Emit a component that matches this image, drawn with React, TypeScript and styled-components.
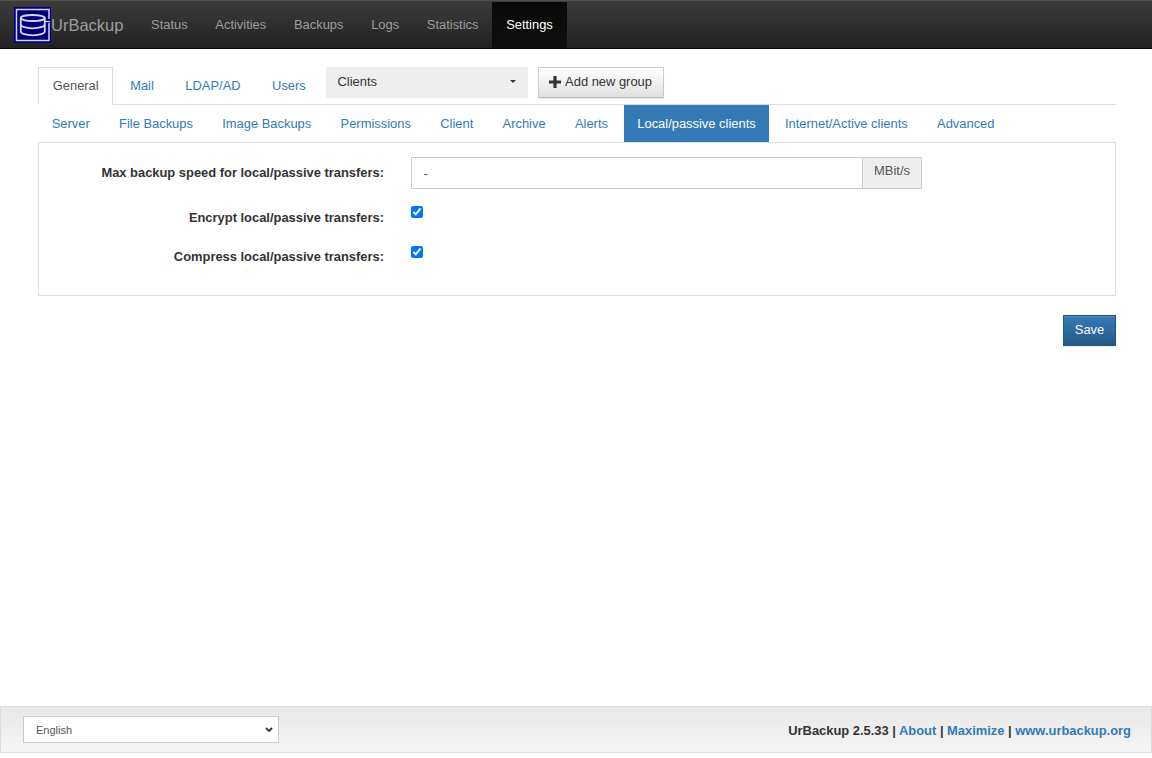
import React from "react";
import styled, { createGlobalStyle } from "styled-components";

const Global = createGlobalStyle`
  html, body { margin: 0; padding: 0; height: 100%; background: #fff; }
  body { font-family: "Liberation Sans", Arial, sans-serif; font-size: 12.92px; line-height: 18px; color: #333; }
  #root { height: 100%; }
  * { box-sizing: border-box; }
`;

const Page = styled.div`
  height: 758px;
  display: flex;
  flex-direction: column;
  padding-bottom: 5px;
  overflow: hidden;
`;
const Navbar = styled.nav`
  height: 49px;
  flex: none;
  display: flex;
  align-items: stretch;
  padding: 2px 0 0 14px;
  background: linear-gradient(to bottom, #3c3c3c 0%, #222 100%);
  border-bottom: 1px solid #080808;
  box-shadow: inset 0 1px 0 #505050;
`;
const Brand = styled.a`
  display: flex;
  align-items: center;
  margin-right: 13.75px;
  font-size: 16.5px;
  color: #9d9d9d;
`;
const NavItem = styled.a<{ $active?: boolean }>`
  display: flex;
  align-items: center;
  padding: 0 13.85px;
  color: ${(p) => (p.$active ? "#fff" : "#9d9d9d")};
  background: ${(p) => (p.$active ? "linear-gradient(to bottom, #0a0a0a, #0f0f0f)" : "transparent")};
`;
const Main = styled.main`
  flex: 1;
  padding: 18px 36px 0 38px;
`;
const TopTabs = styled.div`
  display: flex;
  height: 38px;
  gap: 2px;
  align-items: flex-start;
  border-bottom: 1px solid #ddd;
`;
const TopTab = styled.a<{ $active?: boolean }>`
  height: ${(p) => (p.$active ? "38px" : "37px")};
  display: flex;
  align-items: center;
  padding: ${(p) => (p.$active ? "0 13.75px" : "1px 13.75px 0")};
  color: ${(p) => (p.$active ? "#555" : "#337ab7")};
  background: #fff;
  border: 1px solid ${(p) => (p.$active ? "#ddd" : "transparent")};
  border-bottom-color: ${(p) => (p.$active ? "#fff" : "transparent")};
`;
const GroupSelect = styled.div`
  width: 202px;
  height: 31px;
  margin-left: 3px;
  padding: 0 12px 2px;
  display: flex;
  align-items: center;
  justify-content: space-between;
  background: #eee;
  color: #333;
`;
const Caret = styled.span`
  width: 0;
  height: 0;
  border-top: 3px solid #333;
  border-left: 3px solid transparent;
  border-right: 3px solid transparent;
`;
const AddButton = styled.button`
  width: 126px;
  height: 31px;
  margin-left: 8px;
  padding: 0 0 2px;
  display: flex;
  align-items: center;
  justify-content: center;
  gap: 4px;
  font: inherit;
  color: #333;
  border: 1px solid #ccc;
  border-bottom-color: #bbb;
  background: linear-gradient(to bottom, #fff 0%, #e0e0e0 100%);
  box-shadow: inset 0 1px 0 rgba(255,255,255,.15), 0 1px 1px rgba(0,0,0,.075);
`;
const SubTabs = styled.div`
  display: flex;
  height: 37px;
  gap: 2px;
`;
const SubTab = styled.a<{ $active?: boolean }>`
  display: flex;
  align-items: center;
  padding: 0 13.68px;
  color: ${(p) => (p.$active ? "#fff" : "#337ab7")};
  background: ${(p) => (p.$active ? "#337ab7" : "transparent")};
`;
const Panel = styled.section`
  height: 154px;
  padding: 14px 0 0;
  border: 1px solid #ddd;
`;
const Row = styled.div<{ $h: number }>`
  display: flex;
  height: ${(p) => p.$h}px;
`;
const Label = styled.label`
  width: 345px;
  padding-top: 7px;
  text-align: right;
  font-weight: 700;
`;
const Field = styled.div`
  margin-left: 27px;
  display: flex;
  align-items: flex-start;
`;
const TextInput = styled.input`
  width: 451px;
  height: 32px;
  padding: 0 11.5px;
  font: inherit;
  color: #555;
  border: 1px solid #ccc;
  border-right: 0;
  outline: none;
  background: #fff;
`;
const Addon = styled.span`
  width: 60px;
  height: 32px;
  display: flex;
  align-items: center;
  justify-content: center;
  padding-bottom: 4px;
  color: #555;
  background: #eee;
  border: 1px solid #ccc;
`;
const Check = styled.input<{ $top: number }>`
  margin: ${(p) => p.$top}px 0 0;
  width: 12px;
  height: 12px;
  accent-color: #0075ff;
`;
const SaveRow = styled.div`
  display: flex;
  justify-content: flex-end;
  margin-top: 19px;
`;
const SaveButton = styled.button`
  width: 53px;
  height: 31px;
  padding: 0 0 2px;
  font: inherit;
  color: #fff;
  border: 1px solid #245580;
  background: linear-gradient(to bottom, #337ab7 0%, #265a88 100%);
  box-shadow: inset 0 1px 0 rgba(255,255,255,.15), 0 1px 1px rgba(0,0,0,.075);
`;
const Footer = styled.footer`
  height: 47px;
  flex: none;
  display: flex;
  align-items: center;
  justify-content: space-between;
  padding: 0 20px 0 22px;
  border: 1px solid #ddd;
  background: linear-gradient(to bottom, #e8e8e8 0%, #f5f5f5 100%);
`;
const LangWrap = styled.div`
  position: relative;
  width: 256px;
  height: 27px;
`;
const Lang = styled.select`
  width: 100%;
  height: 100%;
  padding: 0 12px;
  appearance: none;
  font: 11px "Liberation Sans", Arial, sans-serif;
  color: #555;
  background: #fff;
  border: 1px solid #ccc;
  border-radius: 0;
`;
const LangArrow = styled.svg`
  position: absolute;
  right: 6px;
  top: 11px;
  width: 8px;
  height: 5px;
  pointer-events: none;
`;
const FooterInfo = styled.div`
  padding-top: 2px;
  font-weight: 700;
  color: #333;
`;
const FooterLink = styled.a`
  color: #337ab7;
`;

const Logo = () => (
  <svg width="37" height="36" viewBox="0 0 37 36" aria-hidden="true">
    <rect width="37" height="36" fill="#00007f" />
    <path d="M35 12V2.500H2.500V33.500H35V16" fill="none" stroke="#d4d4ee" strokeWidth="1.500" />
    <ellipse cx="18.750" cy="11" rx="12" ry="3" fill="none" stroke="#d8d8ee" strokeWidth="1.800" />
    <path d="M6.750 11V24.500c0 2.200 5.400 3.800 12 3.800s12-1.600 12-3.800V11" fill="none" stroke="#d8d8ee" strokeWidth="1.800" />
    <path d="M6.750 17.500c0 2.200 5.400 3.800 12 3.800s12-1.600 12-3.800" fill="none" stroke="#d8d8ee" strokeWidth="1.800" />
    <path d="M30.750 14.500H36" fill="none" stroke="#d8d8ee" strokeWidth="1.200" />
  </svg>
);

const PlusIcon = () => (
  <svg width="12" height="12" viewBox="0 0 12 12" aria-hidden="true">
    <path d="M4.400 0H7.600V4.400H12V7.600H7.600V12H4.400V7.600H0V4.400H4.400Z" fill="#333" />
  </svg>
);

const navItems = ["Status", "Activities", "Backups", "Logs", "Statistics"];
const subTabs = [
  "Server",
  "File Backups",
  "Image Backups",
  "Permissions",
  "Client",
  "Archive",
  "Alerts",
  "Local/passive clients",
  "Internet/Active clients",
  "Advanced",
];

export default function App() {
  return (
    <Page>
      <Global />
      <Navbar>
        <Brand>
          <Logo />
          UrBackup
        </Brand>
        {navItems.map((n) => (
          <NavItem key={n}>{n}</NavItem>
        ))}
        <NavItem $active>Settings</NavItem>
      </Navbar>
      <Main>
        <TopTabs>
          <TopTab $active>General</TopTab>
          <TopTab>Mail</TopTab>
          <TopTab>LDAP/AD</TopTab>
          <TopTab>Users</TopTab>
          <GroupSelect>
            Clients
            <Caret />
          </GroupSelect>
          <AddButton>
            <PlusIcon />
            Add new group
          </AddButton>
        </TopTabs>
        <SubTabs>
          {subTabs.map((t) => (
            <SubTab key={t} $active={t === "Local/passive clients"}>
              {t}
            </SubTab>
          ))}
        </SubTabs>
        <Panel>
          <Row $h={45}>
            <Label>Max backup speed for local/passive transfers:</Label>
            <Field>
              <TextInput defaultValue="-" />
              <Addon>MBit/s</Addon>
            </Field>
          </Row>
          <Row $h={39}>
            <Label>Encrypt local/passive transfers:</Label>
            <Field>
              <Check type="checkbox" defaultChecked $top={4} />
            </Field>
          </Row>
          <Row $h={40}>
            <Label>Compress local/passive transfers:</Label>
            <Field>
              <Check type="checkbox" defaultChecked $top={5} />
            </Field>
          </Row>
        </Panel>
        <SaveRow>
          <SaveButton>Save</SaveButton>
        </SaveRow>
      </Main>
      <Footer>
        <LangWrap>
          <Lang defaultValue="English">
            <option>English</option>
          </Lang>
          <LangArrow viewBox="0 0 8 5" aria-hidden="true">
            <path d="M1 1l3 3 3-3" fill="none" stroke="#333" strokeWidth="1.800" />
          </LangArrow>
        </LangWrap>
        <FooterInfo>
          UrBackup 2.5.33 | <FooterLink>About</FooterLink> | <FooterLink>Maximize</FooterLink> |{" "}
          <FooterLink>www.urbackup.org</FooterLink>
        </FooterInfo>
      </Footer>
    </Page>
  );
}
